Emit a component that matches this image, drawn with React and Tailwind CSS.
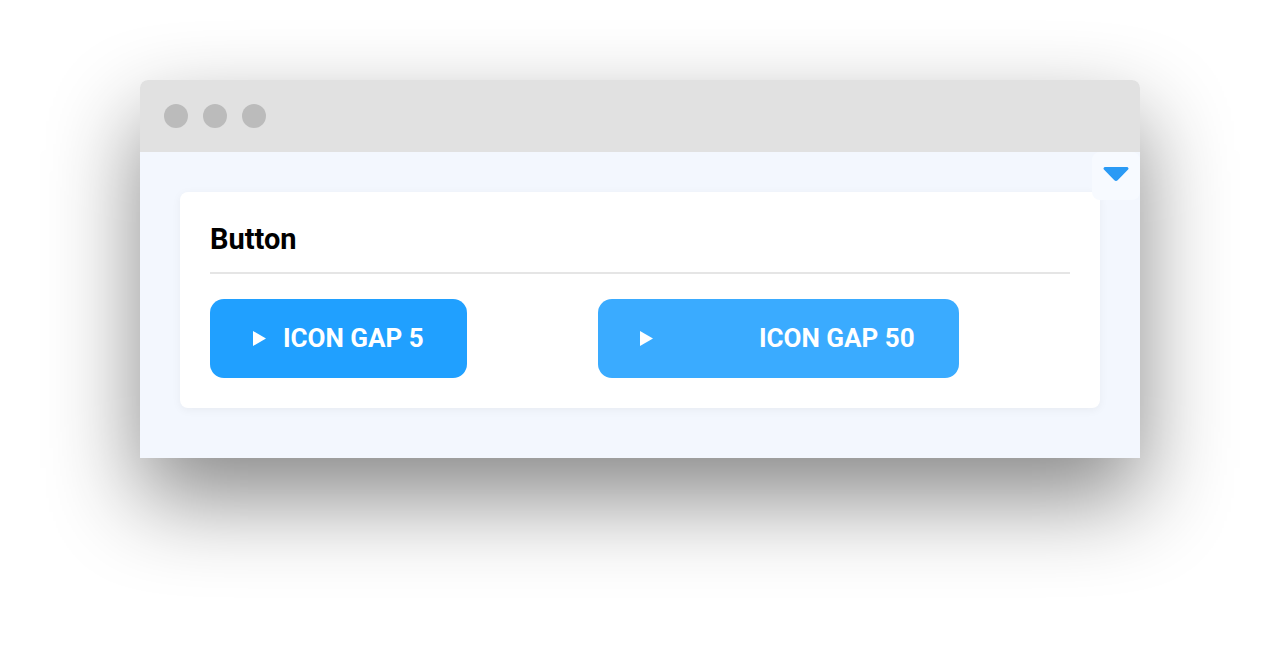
const PlayIcon = () => (
  <svg width="13" height="15" viewBox="0 0 13 15" className="shrink-0">
    <polygon points="0,0 13,7.5 0,15" fill="white" />
  </svg>
)

const App = () => {
  return (
    <div className="min-h-screen bg-white flex justify-center pt-[80px] font-['Roboto',sans-serif]">
      <div className="w-[1000px] h-fit rounded-t-lg overflow-hidden shadow-[0_40px_90px_rgba(0,0,0,0.47)]">
        {/* title bar */}
        <div className="h-[72px] bg-[#e1e1e1] flex items-center pl-6 gap-[15px]">
          <span className="w-6 h-6 rounded-full bg-[#bbbbbb]" />
          <span className="w-6 h-6 rounded-full bg-[#bbbbbb]" />
          <span className="w-6 h-6 rounded-full bg-[#bbbbbb]" />
        </div>

        <div className="relative bg-[#f3f7fe] pt-10 px-10 pb-[50px]">
          <button className="absolute top-0 right-0 w-12 h-12 rounded-lg bg-[#f7faff] flex justify-center pt-[15px]">
            <svg width="26" height="14" viewBox="0 0 26 14">
              <path d="M2 0h22a1.5 1.5 0 0 1 1.1 2.5l-10.2 10.4a2.6 2.6 0 0 1-3.8 0L0.9 2.5A1.5 1.5 0 0 1 2 0z" fill="#2a9af5" />
            </svg>
          </button>

          <div className="bg-white rounded-lg shadow-[0_2px_10px_rgba(0,0,0,0.05)] px-[30px] pt-[30px] pb-[30px]">
            <h2 className="text-[29px] leading-[34px] font-bold text-black">Button</h2>
            <div className="h-[2px] bg-[#e5e5e5] mt-[16px]" />
            <div className="flex items-center gap-[131px] mt-[25px]">
              <button className="h-[79px] w-[257px] rounded-[14px] bg-[#20a0ff] flex items-center pl-[43px] gap-[17px] text-white text-[26px] font-bold">
                <PlayIcon />
                <span>ICON GAP 5</span>
              </button>
              <button className="h-[79px] w-[361px] rounded-[14px] bg-[#3aabff] flex items-center pl-[42px] gap-[106px] text-white text-[26px] font-bold">
                <PlayIcon />
                <span>ICON GAP 50</span>
              </button>
            </div>
          </div>
        </div>
      </div>
    </div>
  )
}

export default App
